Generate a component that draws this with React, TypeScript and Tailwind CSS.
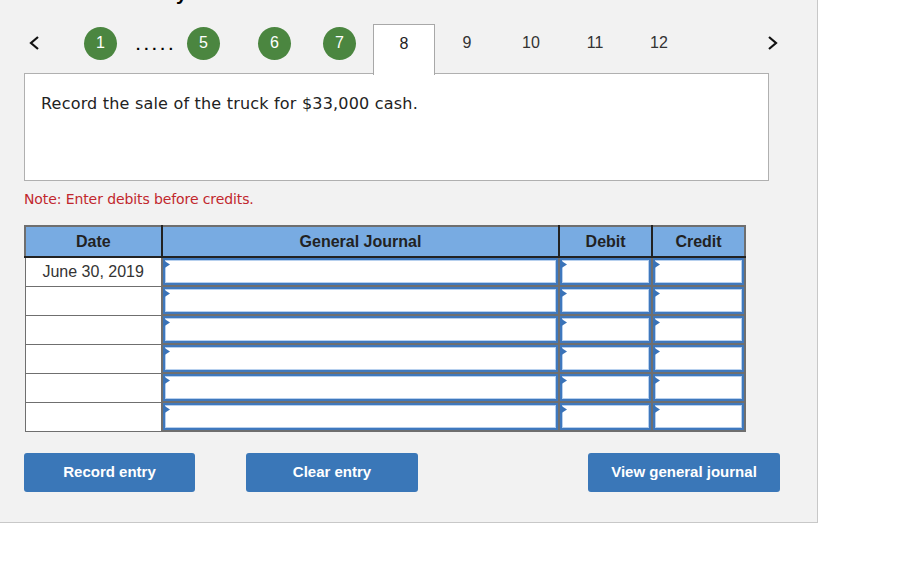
import React from 'react';

const steps = ['9', '10', '11', '12'];
const rows = ['June 30, 2019', '', '', '', '', ''];

const Chevron = ({ dir }: { dir: 'left' | 'right' }) => (
  <svg width="12" height="16" viewBox="0 0 12 16" className="block">
    <path
      d={dir === 'left' ? 'M10 2 L3 8 L10 14' : 'M2 2 L9 8 L2 14'}
      fill="none"
      stroke="#111"
      strokeWidth="2.2"
    />
  </svg>
);

const Done = ({ n, className }: { n: string; className: string }) => (
  <div className={`flex h-[38px] items-center ${className}`}>
    <div className="flex h-[33px] w-[33px] items-center justify-center rounded-full bg-[#4b8640] text-[16px] text-white">
      {n}
    </div>
  </div>
);

const Flag = () => (
  <svg width="7" height="9" viewBox="0 0 7 9" className="absolute -left-[2px] top-0">
    <path d="M0 0 L7 4.5 L0 9 Z" fill="#3a73b8" />
  </svg>
);

const InputCell = () => (
  <td className="h-[29px] border-2 border-[#6f6f6f] p-0">
    <div className="relative h-full w-full border-2 border-[#3f78bd] bg-white shadow-[inset_0_0_0_1px_#b7d0ee]">
      <Flag />
    </div>
  </td>
);

export default function App() {
  return (
    <div className="h-[566px] w-[919px] bg-white font-['Liberation_Sans',Arial,sans-serif] text-[#222]">
      <div className="h-[523px] w-[818px] border-b border-r border-[#c8c8c8] bg-[#f2f2f2]">
        <div className="h-[6px] overflow-hidden pl-[176px]">
          <div className="-mt-[17px] text-[20px] font-bold leading-[20px] text-black">y</div>
        </div>

        <div className="mt-[18px] flex h-[50px] items-start">
          <div className="ml-[28px] flex h-[38px] items-center">
            <Chevron dir="left" />
          </div>
          <Done n="1" className="ml-[44px]" />
          <div className="ml-[19px] flex h-[38px] w-[44px] items-center pt-[4px] text-[15px] font-bold tracking-[4px] text-black">
            .....
          </div>
          <Done n="5" className="ml-[7px]" />
          <Done n="6" className="ml-[38px]" />
          <Done n="7" className="ml-[32px]" />
          <div className="z-10 ml-[17px] h-[51px] w-[62px] border border-b-0 border-[#a8a8a8] bg-white text-[16px] text-[#222]">
            <div className="flex h-[37px] items-center justify-center">8</div>
          </div>
          {steps.map(s => (
            <div key={s} className="flex h-[38px] w-[64px] items-center justify-center text-[16px] text-[#333]">
              {s}
            </div>
          ))}
          <div className="ml-[76px] flex h-[38px] items-center">
            <Chevron dir="right" />
          </div>
        </div>

        <div className="-mt-px ml-[24px] h-[108px] w-[745px] border border-[#b0b0b0] bg-white pl-[16px] pt-[18px] font-['DejaVu_Sans',Verdana,sans-serif] text-[16px] tracking-[0.2px] text-[#222]">
          Record the sale of the truck for $33,000 cash.
        </div>

        <p className="ml-[24px] mt-[8px] font-['DejaVu_Sans',Verdana,sans-serif] text-[14px] tracking-[-0.1px] text-[#c1272d]">
          Note: Enter debits before credits.
        </p>

        <table className="ml-[24px] mt-[15px] w-[722px] border-collapse">
          <thead>
            <tr className="h-[31px] bg-[#78abe2] text-[16px] font-bold text-[#222]">
              <th className="w-[137px] border-2 border-[#6f6f6f] border-b-[#222] border-r-[#222] font-bold">Date</th>
              <th className="w-[398px] border-2 border-[#6f6f6f] border-b-[#222] border-r-[#222] font-bold">General Journal</th>
              <th className="w-[93px] border-2 border-[#6f6f6f] border-b-[#222] border-r-[#222] font-bold">Debit</th>
              <th className="w-[93px] border-2 border-[#6f6f6f] border-b-[#222] font-bold">Credit</th>
            </tr>
          </thead>
          <tbody>
            {rows.map((d, i) => (
              <tr key={i} className="h-[29px]">
                <td className="border border-[#6f6f6f] bg-white text-center text-[16px] text-[#333]">{d}</td>
                <InputCell />
                <InputCell />
                <InputCell />
              </tr>
            ))}
          </tbody>
        </table>

        <div className="ml-[24px] mt-[21px] flex text-[15px] font-bold text-white">
          <button className="h-[39px] w-[171px] rounded-[3px] bg-[#3a77b8]">Record entry</button>
          <button className="ml-[51px] h-[39px] w-[172px] rounded-[3px] bg-[#3a77b8]">Clear entry</button>
          <button className="ml-[170px] h-[39px] w-[192px] rounded-[3px] bg-[#3a77b8]">View general journal</button>
        </div>
      </div>
    </div>
  );
}
